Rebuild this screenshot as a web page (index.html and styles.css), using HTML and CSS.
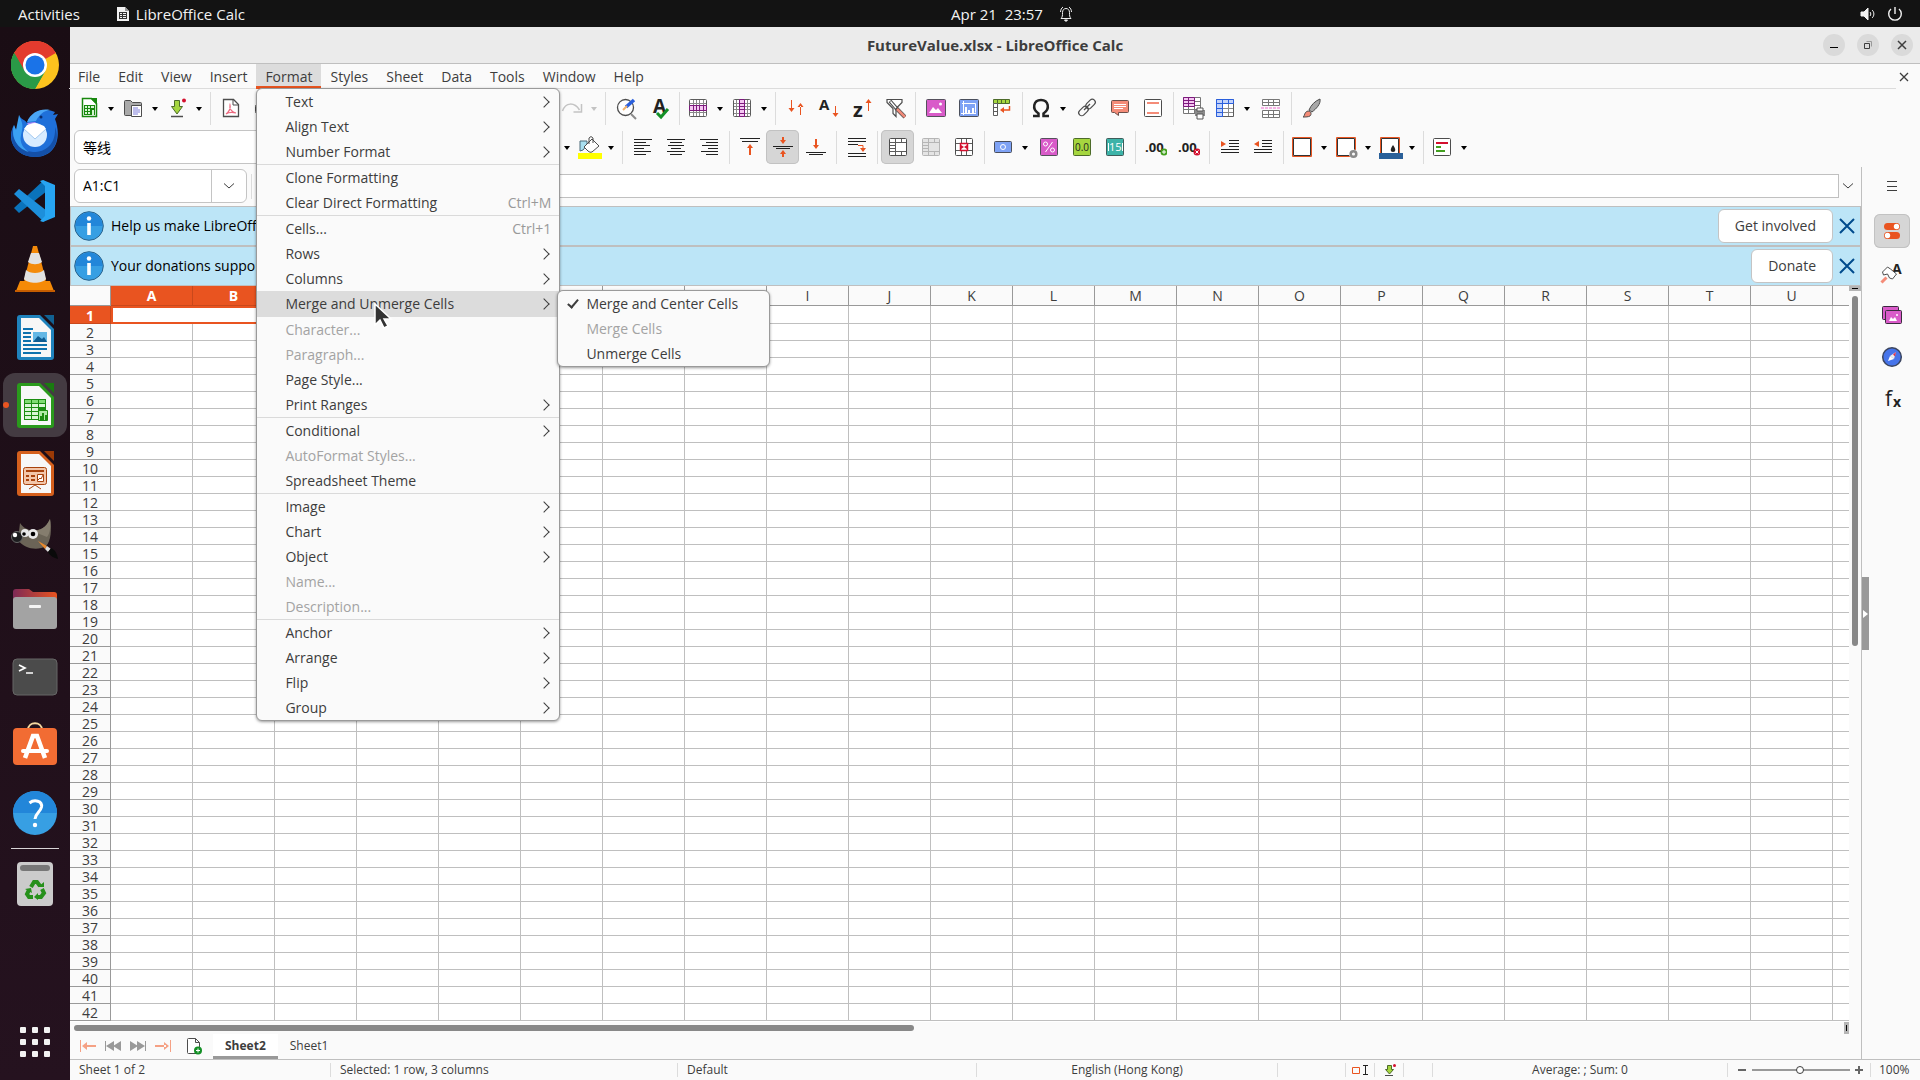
FILE: index.html
```html
<!DOCTYPE html>
<html lang="en">
<head>
    <meta charset="UTF-8">
    <meta name="viewport" content="width=device-width, initial-scale=1.0">
    <title>FutureValue.xlsx - LibreOffice Calc</title>
    <link rel="stylesheet" href="styles.css">
</head>
<body>
    <!-- Top panel -->
    <header class="panel">
        <div class="panel-left">
            <button class="panel-button">Activities</button>
            <button class="panel-button panel-app">
                <svg width="14" height="16" viewBox="0 0 14 16"><path d="M1 1h8l4 4v10H1z" fill="#f2f2f2"/><path d="M9 1l4 4H9z" fill="#999"/><path d="M3 6h8v7H3z" fill="#333"/><path d="M4 7h2v1H4zM7 7h3v1H7zM4 9h2v1H4zM7 9h3v1H7zM4 11h2v1H4zM7 11h3v1H7z" fill="#f2f2f2"/></svg>
                LibreOffice Calc
            </button>
        </div>
        <button class="panel-button panel-clock">
            <time>Apr 21&nbsp; 23:57</time>
            <svg width="14" height="16" viewBox="0 0 14 16" fill="none" stroke="#f2f2f2"><path d="M2 12.500c1.500-1.500 1.500-3 1.500-6C3.500 4 5 2.500 7 2.500S10.500 4 10.500 6.500c0 3 0 4.500 1.500 6zM1.500 6C1.500 4 2.500 2 4 1M12.500 6c0-2-1-4-2.500-5"/><path d="M5.500 14h3L7 15.500z" fill="#f2f2f2"/></svg>
        </button>
        <div class="panel-right">
            <svg width="16" height="16" viewBox="0 0 16 16" fill="none" stroke="#f2f2f2"><path d="M1 6h3l4-4v12l-4-4H1z" fill="#f2f2f2"/><path d="M10 6c1 1 1 3 0 4M12 4c2.500 2 2.500 6 0 8"/></svg>
            <svg width="16" height="16" viewBox="0 0 16 16" fill="none" stroke="#f2f2f2" stroke-width="1.400"><path d="M4 3a6.300 6.300 0 1 0 8 0M8 1v7"/></svg>
        </div>
    </header>

    <div class="desktop">
        <!-- Dock -->
        <nav class="dock">
            <button class="dock-item" aria-label="Chrome">
                <svg width="48" height="48" viewBox="0 0 48 48"><circle cx="24" cy="24" r="24" fill="#fcc31e"/><path d="M24 24L3.200 12A24 24 0 0 1 44.800 12z" fill="#e33b2e"/><path d="M24 24L3.200 12A24 24 0 0 0 24 48L34 30z" fill="#2a9a47"/><path d="M24 12h20.800a24 24 0 0 0-41.600 0L13.600 30z" fill="#e33b2e"/><path d="M3.200 12L13.600 30l10.400 6 10.400-6L24 48A24 24 0 0 1 3.200 12z" fill="#2a9a47"/><circle cx="24" cy="24" r="12" fill="#fff"/><circle cx="24" cy="24" r="9.500" fill="#1a73e8"/></svg>
            </button>
            <button class="dock-item" aria-label="Thunderbird">
                <svg width="48" height="48" viewBox="0 0 48 48"><path d="M8 6c3 6 6 4 8 8 4-12 18-16 28-11l-2 3 5-1-3 5c7 18 1 38-20 38C6 48-6 32 3 16c1 3 2 4 2 6 2-6 4-10 3-16z" fill="#1f70d9"/><path d="M16 13C20 3 30-1 39 1c-7 1-11 5-14 11z" fill="#4ba6f5"/><path d="M2 18c-2 13 7 24 20 25 14 0 23-9 22-25 6 15-3 30-20 30S-4 35 2 18z" fill="#1450a8"/><path d="M8 6c3 8 5 9 2 20-2 8 3 14 8 17C4 39 0 26 3 16l2 5z" fill="#3aa1f2"/><path d="M16 14l8-1 4 3-10 1z" fill="#b38bf5"/><circle cx="24" cy="26" r="12" fill="#d8ecff"/><path d="M13 20l11 10 11-10-2-3-9-3-8 2z" fill="#fff"/><path d="M13 20l11 10 11-10" fill="none" stroke="#a3c9ef"/><circle cx="30" cy="8" r="1.500" fill="#0b2d6b"/></svg>
            </button>
            <button class="dock-item" aria-label="Visual Studio Code">
                <svg width="48" height="48" viewBox="0 0 48 48"><path d="M33 3L3 31l5 5L36 14z" fill="#0a73bb"/><path d="M33 45L3 17l5-5 28 22z" fill="#1d8fdb"/><path d="M32 3l12 5v32l-12 5-3-1 5-5V9l-5-5z" fill="#27a5f2"/></svg>
            </button>
            <button class="dock-item" aria-label="VLC">
                <svg width="48" height="48" viewBox="0 0 48 48"><path d="M9 36h30l4 10H5z" fill="#f58a07"/><path d="M4 45h40v2H4z" fill="#c65d00"/><path d="M22 1h4l9 34c-4 5-18 5-22 0z" fill="#f48a0a"/><path d="M20 8h8l3 9c-4 3-10 3-14 0zM15 25c4 4 14 4 18 0l2 9c-4 5-18 5-22 0z" fill="#e2e2e2"/></svg>
            </button>
            <button class="dock-item" aria-label="Writer">
                <svg width="48" height="48" viewBox="0 0 48 48"><path d="M9 2h20l14 14v28a3 3 0 0 1-3 3H9a3 3 0 0 1-3-3V5a3 3 0 0 1 3-3z" fill="#1f83bd"/><path d="M10 5h18l12 12v27H10z" fill="#f7f7f7"/><path d="M33 2h10v10z" fill="#116192"/><path d="M12 15h10v2H12zM12 19h8v2h-8zM12 23h8v2h-8zM12 27h8v2h-8zM12 31h24v2H12zM12 35h24v2H12zM12 39h18v2H12z" fill="#0e72ae"/><path d="M22 19h14v10H22z" fill="#63b7e5"/><path d="M22 29l5-6 4 3 2-2 3 5z" fill="#0e5c92"/></svg>
            </button>
            <button class="dock-item active" aria-label="Calc">
                <svg width="48" height="48" viewBox="0 0 48 48"><path d="M9 2h20l14 14v28a3 3 0 0 1-3 3H9a3 3 0 0 1-3-3V5a3 3 0 0 1 3-3z" fill="#2a9a1c"/><path d="M10 5h18l12 12v27H10z" fill="#f7f7f7"/><path d="M33 2h10v10z" fill="#1a7a10"/><path d="M13 18h22v21H13z" fill="#1b8d10"/><path d="M14 19h6v3h-6zM21 19h6v3h-6zM28 19h6v3h-6z" fill="#7fdc72"/><path d="M14 23h6v3h-6zM21 23h6v3h-6zM28 23h6v3h-6zM14 27h6v3h-6zM21 27h6v3h-6zM14 31h6v3h-6zM21 31h6v3h-6zM14 35h6v3h-6zM21 35h6v3h-6z" fill="#d9f6d5"/><path d="M27.500 29.500h9v10h-9z" fill="#aeeaa5" stroke="#1b8d10"/><path d="M29 35h2v4h-2zM31 32h2v7h-2zM34 34h2v5h-2z" fill="#1b8d10"/></svg>
            </button>
            <button class="dock-item" aria-label="Impress">
                <svg width="48" height="48" viewBox="0 0 48 48"><path d="M9 2h20l14 14v28a3 3 0 0 1-3 3H9a3 3 0 0 1-3-3V5a3 3 0 0 1 3-3z" fill="#d5601d"/><path d="M10 5h18l12 12v27H10z" fill="#f7f7f7"/><path d="M33 2h10v10z" fill="#9c3a06"/><rect x="12.500" y="18.500" width="23" height="17" rx="2" fill="#f3c6a9" stroke="#a8420c"/><path d="M15 21h18v2H15zM15 26h3v2h-3zM15 30h3v2h-3zM20 26h4v2h-4zM20 30h4v2h-4z" fill="#a8420c"/><path d="M26.500 25.500h6v7h-6z" fill="#fff" stroke="#a8420c"/><path d="M27 31l2-2 1 1 2-4M24 36l-6 4M24 36l6 4" stroke="#a8420c" fill="none"/></svg>
            </button>
            <button class="dock-item" aria-label="GIMP">
                <svg width="48" height="48" viewBox="0 0 48 48"><path d="M9 6c4 6 8 6 12 8 9-1 14-3 18-12 2 9 1 23-4 27-8 5-22 3-28-6z" fill="#6b6457"/><path d="M21 14c9-1 14-3 18-12 1 8 0 14-3 18z" fill="#857d6e"/><circle cx="6" cy="20" r="5.500" fill="#1d1d1f" stroke="#666"/><circle cx="4" cy="18" r="2.200" fill="#fff"/><circle cx="14" cy="16" r="4" fill="#e8e8e8"/><circle cx="22" cy="17" r="5" fill="#e8e8e8"/><circle cx="13" cy="17" r="1.800"/><circle cx="22" cy="17" r="2.300"/><path d="M27 24l9 5-2 3z" fill="#e9892d"/><path d="M36 29l4 3-3 3-3-3z" fill="#ddd"/><path d="M40 31c4 2 6 5 7 11-4-1-8-3-10-7z" fill="#0a0a0a"/></svg>
            </button>
            <button class="dock-item" aria-label="Files">
                <svg width="48" height="48" viewBox="0 0 48 48"><defs><linearGradient id="folder"><stop offset="0" stop-color="#7d2a56"/><stop offset="1" stop-color="#e95420"/></linearGradient></defs><path d="M5 4h13l4 3h21a3 3 0 0 1 3 3v10H2V7a3 3 0 0 1 3-3z" fill="url(#folder)"/><rect x="2" y="12" width="44" height="32" rx="3" fill="#a3a3a3"/><rect x="18" y="20" width="12" height="3" rx="1" fill="#f4f4f4"/></svg>
            </button>
            <button class="dock-item" aria-label="Terminal">
                <svg width="48" height="48" viewBox="0 0 48 48"><rect x="2" y="6" width="44" height="36" rx="4" fill="#4b4b4b" stroke="#666"/><path d="M8 12l6 3-6 3M15 20h7" fill="none" stroke="#fff" stroke-width="1.700"/></svg>
            </button>
            <button class="dock-item" aria-label="Software">
                <svg width="48" height="48" viewBox="0 0 48 48"><path d="M17 9c0-9 14-9 14 0" fill="none" stroke="#f5d8a0" stroke-width="2"/><rect x="2" y="7" width="44" height="37" rx="4" fill="#f26c33"/><path d="M14 37l8-22h4l8 22" fill="none" stroke="#fff" stroke-width="4.500"/><path d="M12 30h24" stroke="#fff" stroke-width="4" stroke-linecap="round"/></svg>
            </button>
            <button class="dock-item" aria-label="Help">
                <svg width="48" height="48" viewBox="0 0 48 48"><circle cx="24" cy="24" r="22" fill="#379fe3"/><path d="M2 24a22 22 0 0 1 44 0z" fill="#2286d9"/><path d="M18.500 14c5-4 13-2 12 4-1 5-6 6-6.500 12" fill="none" stroke="#fff" stroke-width="3"/><circle cx="24" cy="36" r="2.200" fill="#fff"/></svg>
            </button>
            <hr class="dock-line">
            <button class="dock-item" aria-label="Trash">
                <svg width="48" height="48" viewBox="0 0 48 48"><rect x="6" y="2" width="36" height="44" rx="4" fill="#cbcbcb"/><rect x="9" y="5" width="30" height="6" rx="3" fill="#777"/><g fill="none" stroke="#26901b" stroke-width="4"><path d="M20 27l3-5h3l3 4M31 29l2 4-3 4h-4M22 37h-4l-2-3 2-4"/></g><path d="M27 27h6v-5zM27 33v7l-4-3zM14 29l6-1 1 5z" fill="#26901b"/></svg>
            </button>
            <button class="dock-item dock-apps" aria-label="Show Applications">
                <svg width="32" height="32" viewBox="0 0 32 32" fill="#f2f2f2"><rect x="1" y="1" width="6" height="6" rx="1"/><rect x="13" y="1" width="6" height="6" rx="1"/><rect x="25" y="1" width="6" height="6" rx="1"/><rect x="1" y="13" width="6" height="6" rx="1"/><rect x="13" y="13" width="6" height="6" rx="1"/><rect x="25" y="13" width="6" height="6" rx="1"/><rect x="1" y="25" width="6" height="6" rx="1"/><rect x="13" y="25" width="6" height="6" rx="1"/><rect x="25" y="25" width="6" height="6" rx="1"/></svg>
            </button>
        </nav>

        <main class="window">
            <div class="titlebar">
                <h1>FutureValue.xlsx - LibreOffice Calc</h1>
                <div class="window-buttons">
                    <button aria-label="Minimize"><svg width="10" height="10" viewBox="0 0 10 10"><path d="M1 7h8v1H1z"/></svg></button>
                    <button aria-label="Restore"><svg width="10" height="10" viewBox="0 0 10 10" fill="none" stroke="#3d3d3d"><path d="M1.500 3.500h5v5h-5z"/><path d="M3.500 1.500h5v5" stroke="#999"/></svg></button>
                    <button aria-label="Close"><svg width="10" height="10" viewBox="0 0 10 10" stroke="#3d3d3d" stroke-width="1.500"><path d="M1 1l8 8M9 1L1 9"/></svg></button>
                </div>
            </div>

            <div class="menubar">
                <ul class="menus">
                    <li><button>File</button></li>
                    <li><button>Edit</button></li>
                    <li><button>View</button></li>
                    <li><button>Insert</button></li>
                    <li class="open">
                        <button>Format</button>
                        <ul class="menu">
                            <li class="more"><button>Text</button></li>
                            <li class="more"><button>Align Text</button></li>
                            <li class="more"><button>Number Format</button></li>
                            <li class="line"><button>Clone Formatting</button></li>
                            <li><button>Clear Direct Formatting<kbd>Ctrl+M</kbd></button></li>
                            <li class="line"><button>Cells...<kbd>Ctrl+1</kbd></button></li>
                            <li class="more"><button>Rows</button></li>
                            <li class="more"><button>Columns</button></li>
                            <li class="more hover">
                                <button>Merge and Unmerge Cells</button>
                                <ul class="menu submenu">
                                    <li class="checked"><button>Merge and Center Cells</button></li>
                                    <li><button disabled>Merge Cells</button></li>
                                    <li><button>Unmerge Cells</button></li>
                                </ul>
                            </li>
                            <li><button disabled>Character...</button></li>
                            <li><button disabled>Paragraph...</button></li>
                            <li><button>Page Style...</button></li>
                            <li class="more"><button>Print Ranges</button></li>
                            <li class="more line"><button>Conditional</button></li>
                            <li><button disabled>AutoFormat Styles...</button></li>
                            <li><button>Spreadsheet Theme</button></li>
                            <li class="more line"><button>Image</button></li>
                            <li class="more"><button>Chart</button></li>
                            <li class="more"><button>Object</button></li>
                            <li><button disabled>Name...</button></li>
                            <li><button disabled>Description...</button></li>
                            <li class="more line"><button>Anchor</button></li>
                            <li class="more"><button>Arrange</button></li>
                            <li class="more"><button>Flip</button></li>
                            <li class="more"><button>Group</button></li>
                        </ul>
                    </li>
                    <li><button>Styles</button></li>
                    <li><button>Sheet</button></li>
                    <li><button>Data</button></li>
                    <li><button>Tools</button></li>
                    <li><button>Window</button></li>
                    <li><button>Help</button></li>
                </ul>
                <button class="close-doc" aria-label="Close document"><svg width="10" height="10" viewBox="0 0 10 10" stroke="#3d3d3d" stroke-width="1.300"><path d="M1 1l8 8M9 1L1 9"/></svg></button>
            </div>

            <!-- Standard toolbar -->
            <div class="toolbar">
                <button class="tool" aria-label="New"><svg viewBox="0 0 24 24"><path d="M4.500 2.500h9l5 5v13h-14z" fill="#fff" stroke="#18880e" stroke-width="1.500"/><path d="M12 2h7v7z" fill="#18880e"/><path d="M6 9h11v10H6z" fill="#18880e"/><path d="M7 10h2v2H7zM10 10h2v2h-2zM13 10h3v2h-3zM7 13h2v2H7zM10 13h2v2h-2zM7 16h2v2H7zM10 16h2v2h-2zM14 14h2v5h-2z" fill="#d4f5d0"/></svg></button>
                <button class="drop" aria-label="New options"></button>
                <button class="tool" aria-label="Open"><svg viewBox="0 0 24 24"><path d="M2.500 5.500q0-1 1-1h5l2 2h8q1 0 1 1v12h-16q-1 0-1-1z" fill="#a9a9a9" stroke="#4d4d4d"/><path d="M9.500 9.500h10v11h-10z" fill="#fff" stroke="#4d4d4d"/><path d="M11 12h5M11 14h7M11 16h7M11 18h5" stroke="#7c7cd8"/></svg></button>
                <button class="drop" aria-label="Open options"></button>
                <button class="tool" aria-label="Save"><svg viewBox="0 0 24 24"><path d="M8.500 4.500h5v6h3L11 18l-5.500-7.500h3z" fill="#a5d63f" stroke="#4d6b2a"/><path d="M5 20.500h12" stroke="#4d4d4d" stroke-width="1.500"/><circle cx="18" cy="4.500" r="2" fill="#d3102e"/></svg></button>
                <button class="drop" aria-label="Save options"></button>
                <hr>
                <button class="tool" aria-label="Export as PDF"><svg viewBox="0 0 24 24"><path d="M5.500 3.500h10l5 5v12h-15z" fill="#fff" stroke="#4d4d4d" stroke-width="1.300"/><path d="M15 3v6h6" fill="none" stroke="#4d4d4d"/><path d="M8 18c3-2 5-6 4-9-1 4 2 7 6 8-4-1-7-1-10 1z" fill="none" stroke="#ec6a80" stroke-width="1.200"/></svg></button>
                <button class="tool" aria-label="Print"><svg viewBox="0 0 24 24"><rect x="4.500" y="8.500" width="17" height="9" rx="2" fill="#a9a9a9" stroke="#4d4d4d"/></svg></button>
                <span class="toolbar-rest"></span>
                <button class="tool" aria-label="Redo"><svg viewBox="0 0 24 24"><path d="M1.500 15c3-9 12-9 17-1" fill="none" stroke="#c3c3c3" stroke-width="1.500"/><path d="M20.500 8v8h-8" fill="none" stroke="#c3c3c3" stroke-width="1.500"/></svg></button>
                <button class="drop off" aria-label="Redo options"></button>
                <hr>
                <button class="tool" aria-label="Find and Replace"><svg viewBox="0 0 24 24"><circle cx="12.500" cy="11.500" r="8" fill="#fff" stroke="#4d4d4d" stroke-width="1.300"/><path d="M18 18l5 5" stroke="#8a8a8a" stroke-width="2"/><path d="M13 11l8-7" stroke="#2a5fdd" stroke-width="3.500"/><path d="M10 14l4-4" stroke="#f2b26b" stroke-width="2"/></svg></button>
                <button class="tool" aria-label="Spelling"><svg viewBox="0 0 24 24"><text x="7" y="17" class="glyph-bold" font-size="19">A</text><path d="M11 17l4 4 7-8" fill="none" stroke="#149026" stroke-width="3"/></svg></button>
                <hr>
                <button class="tool" aria-label="Row"><svg viewBox="0 0 24 24"><rect x="2.500" y="3.500" width="17" height="17" rx="1" fill="#fff" stroke="#5c5c5c"/><path d="M6.500 4v16M9.500 4v16M12.500 4v16M16.500 4v16M3 7.500h16M3 16.500h16" stroke="#8a8a8a"/><path d="M2.500 9.500h17v5h-17z" fill="#f4c6f2" stroke="#7d1a7d"/><path d="M6.500 10v4M9.500 10v4M12.500 10v4M16.500 10v4" stroke="#7d1a7d"/></svg></button>
                <button class="drop" aria-label="Row options"></button>
                <button class="tool" aria-label="Column"><svg viewBox="0 0 24 24"><rect x="2.500" y="3.500" width="17" height="17" rx="1" fill="#fff" stroke="#5c5c5c"/><path d="M3 7.500h16M3 10.500h16M3 13.500h16M3 17.500h16M5.500 4v16M16.500 4v16" stroke="#8a8a8a"/><path d="M8.500 3.500h5v17h-5z" fill="#f4c6f2" stroke="#7d1a7d"/><path d="M9 7.500h4M9 10.500h4M9 13.500h4M9 17.500h4" stroke="#7d1a7d"/></svg></button>
                <button class="drop" aria-label="Column options"></button>
                <hr>
                <button class="tool" aria-label="Sort"><svg viewBox="0 0 24 24" class="orange"><path d="M8 4h1v9H8zM5.500 12h6l-3 4zM17 10h1v9h-1zM14.500 11h6l-3-4z"/></svg></button>
                <button class="tool" aria-label="Sort Ascending"><svg viewBox="0 0 24 24"><text x="3" y="14" class="glyph-bold" font-size="15">A</text><path d="M19 10h1v8h-1zM16.500 17h6l-3 4z" fill="#e95420"/></svg></button>
                <button class="tool" aria-label="Sort Descending"><svg viewBox="0 0 24 24"><text x="4" y="21" class="glyph-bold" font-size="20">z</text><path d="M19 7h1v8h-1zM16.500 7h6l-3-4z" fill="#e95420"/></svg></button>
                <button class="tool" aria-label="AutoFilter"><svg viewBox="0 0 24 24"><path d="M5 3.500h15v3l-6 6v8l-3-3v-5l-6-6z" fill="#fff" stroke="#4d4d4d" stroke-width="1.200"/><path d="M8 5l7 8" stroke="#4d4d4d" stroke-width="3.500"/><path d="M8.500 5.500l6 7" stroke="#fff" stroke-width="1.500"/><path d="M14 12l9 9" stroke="#4d4d4d" stroke-width="4"/><path d="M15 13l8 8" stroke="#f08a78" stroke-width="2.500"/></svg></button>
                <hr>
                <button class="tool" aria-label="Insert Image"><svg viewBox="0 0 24 24"><rect x="3.500" y="3.500" width="19" height="17" rx="1" fill="#d95bc9" stroke="#55505c"/><path d="M6 17l4-6 3 3 2-2 4 5z" fill="#fff"/><circle cx="17.500" cy="8" r="1.500" fill="#fff"/></svg></button>
                <button class="tool" aria-label="Insert Chart"><svg viewBox="0 0 24 24"><rect x="3.500" y="3.500" width="19" height="17" rx="1" fill="#7ea2f5" stroke="#4a4f5c"/><path d="M7.500 5v14M5 17.500h15M6 7.500h13.500v9" stroke="#fff" fill="none"/><path d="M9 11h2v6H9zM12 14h2v3h-2zM16 12h2v5h-2z" fill="#fff"/></svg></button>
                <button class="tool" aria-label="Pivot Table"><svg viewBox="0 0 24 24"><path d="M4.500 3.500h16v4h-16z" fill="#a5d63f" stroke="#4d6b2a"/><path d="M8.500 4v3M12.500 4v3M16.500 4v3" stroke="#4d6b2a"/><path d="M4.500 7.500h4v12h-4zM5 11.500h3M5 15.500h3" fill="#fff" stroke="#5c5c5c"/><path d="M20.500 10v4h-6" fill="none" stroke="#e95420" stroke-width="1.500"/><path d="M15 11v6l-4-3z" fill="#e95420"/></svg></button>
                <hr>
                <button class="tool" aria-label="Special Character"><svg viewBox="0 0 24 24"><path d="M3 20h5.500v-2.500C1.500 13 3.500 4 11 4s9.500 9 2.500 13.500V20H19" fill="none" stroke="#222" stroke-width="2.500"/></svg></button>
                <button class="drop" aria-label="Special Character options"></button>
                <button class="tool" aria-label="Hyperlink"><svg viewBox="0 0 24 24" fill="none" stroke="#4d4d4d" stroke-width="1.200"><rect x="4" y="12" width="11" height="6" rx="3" transform="rotate(-45 9.500 15)"/><rect x="11" y="5" width="11" height="6" rx="3" transform="rotate(-45 16.500 8)"/><path d="M10 14l6-6"/></svg></button>
                <button class="tool" aria-label="Comment"><svg viewBox="0 0 24 24"><path d="M4.500 5.500q0-1 1-1h15q1 0 1 1v10q0 1-1 1h-9v3l-4-3h-2q-1 0-1-1z" fill="#f48c78" stroke="#6b4f4a"/><path d="M7 8.500h12M7 10.500h12M7 12.500h9" stroke="#fff"/></svg></button>
                <button class="tool" aria-label="Headers and Footers"><svg viewBox="0 0 24 24"><rect x="4.500" y="3.500" width="17" height="17" rx="1" fill="#fff" stroke="#4d4d4d"/><path d="M7 7h12M7 17h12" stroke="#f48c78" stroke-width="2"/></svg></button>
                <hr>
                <button class="tool" aria-label="Define Print Area"><svg viewBox="0 0 24 24"><path d="M2.500 1.500h17v16h-17zM3 5.500h16M3 9.500h16M3 13.500h16M7.500 2v15M13.500 2v15" fill="#fff" stroke="#777"/><path d="M2.500 1.500h11v9h-11z" fill="#f4c6f2" stroke="#7d1a7d"/><path d="M3 4.500h10M3 7.500h10M7.500 2v8" stroke="#7d1a7d"/><path d="M14 14h10v6H14z" fill="#8a8a8a"/><path d="M16 12h6v3h-6zM16 18h6v5h-6z" fill="#fff" stroke="#555"/></svg></button>
                <button class="tool" aria-label="Freeze Rows and Columns"><svg viewBox="0 0 24 24"><path d="M2.500 3.500h17v17h-17z" fill="#fff" stroke="#5c5c5c"/><path d="M2.500 3.500h17v4h-11v13h-6z" fill="#c3d3fa"/><path d="M8.500 8v12M14.500 8v12M9 12.500h10M9 16.500h10" stroke="#8a8a8a"/><path d="M2.500 3.500h17v4h-11v13h-6zM8.500 4v4M14.500 4v4M3 7.500h5M3 12.500h5M3 16.500h5" stroke="#2a5fdd" fill="none"/></svg></button>
                <button class="drop" aria-label="Freeze options"></button>
                <button class="tool" aria-label="Split Window"><svg viewBox="0 0 24 24" fill="#fff" stroke="#777"><path d="M4.500 3.500h17v6h-17zM10.500 4v5M15.500 4v5M5 6.500h16M4.500 14.500h17v7h-17zM10.500 15v6M15.500 15v6M5 18.500h16"/><path d="M3 12h20" stroke="#f06bd0" stroke-dasharray="3 1"/></svg></button>
                <hr>
                <button class="tool" aria-label="Show Draw Functions"><svg viewBox="0 0 24 24"><path d="M10 14c2-5 6-9 11-11 1 5-4 10-8 13z" fill="#a9a9a9" stroke="#4d4d4d"/><path d="M4 21c2-1 1-5 5-6 3 0 4 3 2 5-2 1-4 1-7 1z" fill="#f48c78" stroke="#4d4d4d"/></svg></button>
            </div>

            <!-- Formatting toolbar -->
            <div class="toolbar">
                <input class="font-name" type="text" value="等线" aria-label="Font name">
                <span class="toolbar-fill"></span>
                <button class="drop" aria-label="Font color options"></button>
                <button class="tool" aria-label="Background Color"><svg viewBox="0 0 24 24"><path d="M2 16V6h7v4l-4 5z" fill="#a9dff0" stroke="#4d6b78"/><path d="M6 12l8-8 7 7-7 6q-2 1-4-1z" fill="#fff" stroke="#4d4d4d"/><path d="M11 9V3q2-3 4 0v5" fill="none" stroke="#4d4d4d"/><path d="M0 18h24v6H0z" fill="#ff0"/></svg></button>
                <button class="drop" aria-label="Background Color options"></button>
                <hr>
                <button class="tool" aria-label="Align Left"><svg viewBox="0 0 24 24" class="lines"><path d="M4 4.500h18M4 7.500h12M4 10.500h16M4 13.500h10M4 16.500h17M4 19.500h12"/></svg></button>
                <button class="tool" aria-label="Center Horizontally"><svg viewBox="0 0 24 24" class="lines"><path d="M4 4.500h18M7 7.500h12M5 10.500h16M8 13.500h10M4 16.500h18M7 19.500h12"/></svg></button>
                <button class="tool" aria-label="Align Right"><svg viewBox="0 0 24 24" class="lines"><path d="M4 4.500h18M10 7.500h12M6 10.500h16M12 13.500h10M5 16.500h17M10 19.500h12"/></svg></button>
                <hr>
                <button class="tool" aria-label="Align Top"><svg viewBox="0 0 24 24" class="lines"><path d="M3 3.500h20M5 6.500h16"/><path d="M12 13h2v7h-2zM10 13h6l-3-4z" class="orange"/></svg></button>
                <button class="tool pressed" aria-label="Center Vertically"><svg viewBox="0 0 24 24" class="lines"><path d="M3 11.500h20M6 13.500h14"/><path d="M12 2h2v3h-2zM10 5h6l-3 4zM12 19h2v3h-2zM10 19h6l-3-4z" class="orange"/></svg></button>
                <button class="tool" aria-label="Align Bottom"><svg viewBox="0 0 24 24" class="lines"><path d="M3 17.500h20M6 19.500h14"/><path d="M12 4h2v7h-2zM10 10h6l-3 4z" class="orange"/></svg></button>
                <hr>
                <button class="tool" aria-label="Wrap Text"><svg viewBox="0 0 24 24" class="lines"><path d="M4 3.500h18M4 6.500h18M4 9.500h10M4 18.500h18M4 21.500h18"/><path d="M14 10.500h5v3" stroke="#e95420"/><path d="M16 13h6l-3 4z" class="orange"/></svg></button>
                <hr>
                <button class="tool pressed" aria-label="Merge and Center Cells"><svg viewBox="0 0 24 24"><rect x="4.500" y="3.500" width="17" height="17" rx="1" fill="#fff" stroke="#4d4d4d"/><path d="M10.500 4v16M5 7.500h16M5 16.500h16M5 10.500h5M5 13.500h5M16.500 4v3M16.500 17v3" stroke="#5c5c5c"/></svg></button>
                <button class="tool" aria-label="Merge Cells"><svg viewBox="0 0 24 24"><rect x="4.500" y="3.500" width="17" height="17" rx="1" fill="#e4e4e4" stroke="#b5b5b5"/><path d="M10.500 4v16M5 7.500h16M5 16.500h16M5 10.500h5M5 13.500h5M16.500 4v3M16.500 17v3" stroke="#b5b5b5"/></svg></button>
                <button class="tool" aria-label="Unmerge Cells"><svg viewBox="0 0 24 24"><rect x="4.500" y="3.500" width="17" height="17" rx="1" fill="#fff" stroke="#4d4d4d"/><path d="M10.500 4v16M15.500 4v16M5 8.500h16M5 15.500h16" stroke="#5c5c5c"/><path d="M9.500 8.500h7v7h-7z" fill="#fff" stroke="#d3102e" stroke-width="1.500"/><path d="M10 10l3 2-3 2zM16 10l-3 2 3 2z" fill="#d3102e"/></svg></button>
                <hr>
                <button class="tool" aria-label="Format as Currency"><svg viewBox="0 0 24 24"><rect x="2.500" y="6.500" width="17" height="11" rx="1" fill="#7ea2f5" stroke="#4a4f5c"/><circle cx="11" cy="12" r="2.500" fill="none" stroke="#fff"/></svg></button>
                <button class="drop" aria-label="Currency options"></button>
                <button class="tool" aria-label="Format as Percent"><svg viewBox="0 0 24 24"><rect x="4.500" y="3.500" width="17" height="17" rx="1" fill="#d95bc9" stroke="#55505c"/><circle cx="9.500" cy="9" r="2" fill="none" stroke="#fff"/><circle cx="16.500" cy="15" r="2" fill="none" stroke="#fff"/><path d="M16.500 7l-7 10" stroke="#fff"/></svg></button>
                <button class="tool" aria-label="Format as Number"><svg viewBox="0 0 24 24"><rect x="4.500" y="3.500" width="17" height="17" rx="1" fill="#a5d63f" stroke="#4d6b2a"/><text x="6" y="16" class="glyph" font-size="10">0.0</text></svg></button>
                <button class="tool" aria-label="Format as Date"><svg viewBox="0 0 24 24"><rect x="4.500" y="3.500" width="17" height="17" rx="1" fill="#3db3a8" stroke="#3f5c5a"/><text x="7" y="16" font-size="11" fill="#fff">15</text><path d="M6.500 8v8M20.500 8v8" stroke="#fff"/></svg></button>
                <hr>
                <button class="tool" aria-label="Add Decimal Place"><svg viewBox="0 0 24 24"><text x="2" y="17" class="glyph-bold" font-size="13">.00</text><circle cx="21" cy="17" r="3.500" fill="#43a01f"/><path d="M21 15v4M19 17h4" stroke="#fff"/></svg></button>
                <button class="tool" aria-label="Delete Decimal Place"><svg viewBox="0 0 24 24"><text x="2" y="17" class="glyph-bold" font-size="13">.00</text><circle cx="21" cy="17" r="3.500" fill="#d3102e"/><path d="M19.500 15.500l3 3M22.500 15.500l-3 3" stroke="#fff"/></svg></button>
                <hr>
                <button class="tool" aria-label="Increase Indent"><svg viewBox="0 0 24 24" class="lines"><path d="M12 5.500h10M12 8.500h10M12 11.500h10M4 14.500h18M4 17.500h18"/><path d="M4 6l5 3-5 3z" class="orange"/></svg></button>
                <button class="tool" aria-label="Decrease Indent"><svg viewBox="0 0 24 24" class="lines"><path d="M12 5.500h10M12 8.500h10M12 11.500h10M4 14.500h18M4 17.500h18"/><path d="M9 6L4 9l5 3z" class="orange"/></svg></button>
                <hr>
                <button class="tool" aria-label="Borders"><svg viewBox="0 0 24 24"><path d="M1.500 2.500h19v19h-19z" fill="#fff" stroke="#e95420"/><path d="M2.500 3.500h17v17h-17z" fill="none" stroke="#333"/></svg></button>
                <button class="drop" aria-label="Borders options"></button>
                <button class="tool" aria-label="Border Style"><svg viewBox="0 0 24 24"><path d="M1.500 2.500h19v19h-19z" fill="#fff" stroke="#e95420"/><path d="M2.500 3.500h17v17h-17z" fill="none" stroke="#333"/><circle cx="18.500" cy="19" r="4.500" fill="#fafafa"/><circle cx="18.500" cy="19" r="2.800" fill="none" stroke="#8a8a8a" stroke-width="2.500"/></svg></button>
                <button class="drop" aria-label="Border Style options"></button>
                <button class="tool" aria-label="Border Color"><svg viewBox="0 0 24 24"><path d="M1.500 18V2.500h19V18" fill="#fff" stroke="#e95420"/><path d="M2.500 18V3.500h17V18" fill="none" stroke="#333"/><path d="M14 10c3 4 3 7 0 7s-3-3 0-7z" fill="#222"/><path d="M0 18h24v6H0z" fill="#2a6099"/></svg></button>
                <button class="drop" aria-label="Border Color options"></button>
                <hr>
                <button class="tool" aria-label="Conditional Formatting"><svg viewBox="0 0 24 24"><rect x="2.500" y="3.500" width="17" height="17" rx="1" fill="#fff" stroke="#4d4d4d"/><path d="M5 8h12" stroke="#d3102e" stroke-width="2"/><path d="M5 12h5M5 16h9" stroke="#43a01f" stroke-width="2"/></svg></button>
                <button class="drop" aria-label="Conditional options"></button>
            </div>

            <div class="work">
                <section class="document">
                    <div class="formula-bar">
                        <div class="name-box">
                            <input type="text" value="A1:C1" aria-label="Name Box">
                            <button aria-label="Show names"><svg width="12" height="8" viewBox="0 0 12 8" fill="none" stroke="#3d3d3d"><path d="M1 1.500l5 4.500 5-4.500"/></svg></button>
                        </div>
                        <hr>
                        <input class="formula" type="text" aria-label="Input line">
                        <button class="expand" aria-label="Expand formula bar"><svg width="12" height="8" viewBox="0 0 12 8" fill="none" stroke="#3d3d3d"><path d="M1 1.500l5 4.500 5-4.500"/></svg></button>
                    </div>

                    <div class="infobar">
                        <svg width="30" height="30" viewBox="0 0 30 30"><circle cx="15" cy="15" r="14.300" fill="#379fe3" stroke="#2b628c"/><path d="M1.500 15a13.500 13.500 0 0 1 27 0z" fill="#2286d9"/><path d="M13.200 12h3.600v12h-3.600z" fill="#fff"/><circle cx="15" cy="7.500" r="2.200" fill="#fff"/></svg>
                        <p>Help us make LibreOffice even better!</p>
                        <button class="action">Get involved</button>
                        <button class="dismiss" aria-label="Close"><svg width="16" height="16" viewBox="0 0 16 16" stroke="#004b8d" stroke-width="2"><path d="M1 1l14 14M15 1L1 15"/></svg></button>
                    </div>
                    <div class="infobar">
                        <svg width="30" height="30" viewBox="0 0 30 30"><circle cx="15" cy="15" r="14.300" fill="#379fe3" stroke="#2b628c"/><path d="M1.500 15a13.500 13.500 0 0 1 27 0z" fill="#2286d9"/><path d="M13.200 12h3.600v12h-3.600z" fill="#fff"/><circle cx="15" cy="7.500" r="2.200" fill="#fff"/></svg>
                        <p>Your donations support our worldwide community.</p>
                        <button class="action">Donate</button>
                        <button class="dismiss" aria-label="Close"><svg width="16" height="16" viewBox="0 0 16 16" stroke="#004b8d" stroke-width="2"><path d="M1 1l14 14M15 1L1 15"/></svg></button>
                    </div>

                    <div class="sheet-area">
                        <div class="sheet">
                            <table id="grid">
                                <thead></thead>
                                <tbody></tbody>
                            </table>
                        </div>
                        <div class="vscroll">
                            <span class="split-v"></span>
                            <span class="thumb-v"></span>
                        </div>
                    </div>

                    <div class="hscroll">
                        <span class="thumb-h"></span>
                        <span class="split-h"></span>
                    </div>

                    <div class="tabs">
                        <button class="tab-nav" aria-label="First sheet"><svg width="18" height="14" viewBox="0 0 18 14" fill="#f5a184"><path d="M1 1h1v12H1zM6 6h11v2H6zM3 7l5-4v8z"/></svg></button>
                        <button class="tab-nav" aria-label="Previous sheet"><svg width="18" height="14" viewBox="0 0 18 14" fill="#999"><path d="M1 2h1v10H1zM10 2v10L2 7zM17 2v10L9 7z"/></svg></button>
                        <button class="tab-nav" aria-label="Next sheet"><svg width="18" height="14" viewBox="0 0 18 14" fill="#999"><path d="M16 2h1v10h-1zM8 2v10l8-5zM1 2v10l8-5z"/></svg></button>
                        <button class="tab-nav" aria-label="Last sheet"><svg width="18" height="14" viewBox="0 0 18 14" fill="#f5a184"><path d="M16 1h1v12h-1zM1 6h11v2H1zM15 7l-5-4v8z"/></svg></button>
                        <button class="tab-add" aria-label="Add sheet"><svg width="16" height="18" viewBox="0 0 16 18"><path d="M1.500 2.500q0-1 1-1h7l4 4v10q0 1-1 1h-10q-1 0-1-1zM9.500 1.500v4h4" fill="#fff" stroke="#4d4d4d"/><circle cx="12" cy="13.500" r="4" fill="#149026"/><path d="M12 11.500v4M10 13.500h4" stroke="#fff"/></svg></button>
                        <button class="tab current">Sheet2</button>
                        <button class="tab">Sheet1</button>
                    </div>
                </section>

                <aside class="sidebar">
                    <button class="deck-menu" aria-label="Sidebar settings"><svg width="12" height="10" viewBox="0 0 12 10" stroke="#3d3d3d"><path d="M1 .500h10M1 5.500h10M1 9.500h10"/></svg></button>
                    <button class="deck pressed" aria-label="Properties"><svg viewBox="0 0 24 24"><rect x="4" y="4" width="16" height="7" rx="3.500" fill="#e95420"/><rect x="4" y="13" width="16" height="7" rx="3.500" fill="#e95420"/><circle cx="16.500" cy="7.500" r="2.700" fill="#fff"/><circle cx="7.500" cy="16.500" r="2.700" fill="#fff"/></svg></button>
                    <button class="deck" aria-label="Styles"><svg viewBox="0 0 24 24"><text x="12" y="13" class="glyph-bold" font-size="14">A</text><path d="M1.500 21.500l5-5" stroke="#f48c78" stroke-width="3"/><path d="M2.500 11l5-5 3 2 6 5-4 5-3-1-2-4-4 1z" fill="#fff" stroke="#4d4d4d"/></svg></button>
                    <button class="deck" aria-label="Gallery"><svg viewBox="0 0 24 24" stroke="#3a2c3e"><rect x="2.500" y="3.500" width="16" height="13" rx="1" fill="#d95bc9"/><rect x="5.500" y="7.500" width="16" height="13" rx="1" fill="#d95bc9"/><path d="M9 18l2-4 2 2 2-2 2 4z" fill="#fff" stroke="none"/><circle cx="17" cy="12" r="1" fill="#fff" stroke="none"/></svg></button>
                    <button class="deck" aria-label="Navigator"><svg viewBox="0 0 24 24"><circle cx="12" cy="12" r="9.300" fill="#4674ea" stroke="#3c4660" stroke-width="1.500"/><path d="M8 16l2-5 4 3z" fill="#fff"/><path d="M10 11l6-4-2 7z" fill="#eee"/><path d="M16 7l-3 2.500 2 2z" fill="#e0304a"/></svg></button>
                    <button class="deck" aria-label="Functions"><svg viewBox="0 0 24 24"><text x="5" y="19" class="glyph" font-size="21">f</text><text x="13" y="20" class="glyph-bold" font-size="14">x</text></svg></button>
                    <button class="deck-handle" aria-label="Hide sidebar"></button>
                </aside>
            </div>

            <footer class="statusbar">
                <span>Sheet 1 of 2</span>
                <span>Selected: 1 row, 3 columns</span>
                <span>Default</span>
                <span class="center">English (Hong Kong)</span>
                <span></span>
                <span class="center icon"><svg width="18" height="12" viewBox="0 0 18 12" fill="none"><path d="M1.500 3.500h7v6h-7z" stroke="#e95420"/><path d="M12 1.500h5M12 10.500h5M14.500 2v8" stroke="#222"/></svg></span>
                <span class="center icon"><svg width="14" height="14" viewBox="0 0 14 14"><path d="M5.500 2.500h4v4h2L7.500 11l-4-4.500h2z" fill="#a5d63f" stroke="#4d6b2a"/><path d="M3 12.500h8" stroke="#4d4d4d"/><circle cx="12.500" cy="2.500" r="1.500" fill="#d3102e"/></svg></span>
                <span></span>
                <span class="center">Average: ; Sum: 0</span>
                <span class="zoom">
                    <button aria-label="Zoom out"><svg width="10" height="10" viewBox="0 0 10 10"><path d="M1 4h8v2H1z" fill="#666"/></svg></button>
                    <input type="range" min="20" max="180" value="99" aria-label="Zoom">
                    <button aria-label="Zoom in"><svg width="10" height="10" viewBox="0 0 10 10"><path d="M1 4h8v2H1zM4 1h2v8H4z" fill="#666"/></svg></button>
                </span>
                <span>100%</span>
            </footer>
        </main>
    </div>

    <svg class="pointer" width="20" height="28" viewBox="0 0 20 28"><path d="M2 1v21l5-5 4 8 4-2-4-7h7z" fill="#333" stroke="#fff" stroke-width="1.500"/></svg>

    <script>
        const columns = 'ABCDEFGHIJKLMNOPQRSTU'.split('');
        const rowCount = 42;
        const mergedColumns = 3;

        // Column headers, with an empty cell at the end for the part of V that fits
        let head = '<tr><th class="corner"></th>';
        columns.forEach((name, i) => {
            head += `<th class="${i < mergedColumns ? 'selected' : ''}">${name}</th>`;
        });
        head += '<th class="last"></th></tr>';
        document.querySelector('#grid thead').innerHTML = head;

        // A1:C1 is one merged cell
        let body = '';
        for (let row = 1; row <= rowCount; row++) {
            const first = row === 1;
            body += `<tr><th class="${first ? 'selected' : ''}">${row}</th>`;
            body += first ? `<td class="cursor" colspan="${mergedColumns}"></td>` : '';
            body += '<td></td>'.repeat(columns.length - (first ? mergedColumns : 0));
            body += '<td class="last"></td></tr>';
        }
        document.querySelector('#grid tbody').innerHTML = body;
    </script>
</body>
</html>
```

FILE: styles.css
```css
* {
    box-sizing: border-box;
}
body {
    margin: 0;
    height: 100vh;
    display: flex;
    flex-direction: column;
    overflow: hidden;
    background: #1d0f18;
    color: #3d3d3d;
    font-family: "Open Sans", "Noto Sans", "Noto Sans CJK SC", sans-serif;
    font-size: 14px;
    line-height: 20px;
}
button, input {
    margin: 0;
    padding: 0;
    border: none;
    background: none;
    color: inherit;
    font: inherit;
}
button {
    display: flex;
    align-items: center;
    justify-content: center;
}
svg {
    display: block;
    flex: none;
}
ul {
    margin: 0;
    padding: 0;
    list-style: none;
}

/* Top panel */
.panel {
    display: grid;
    grid-template-columns: 1fr auto 1fr;
    align-items: center;
    height: 27px;
    flex: none;
    background: #131313;
    color: #f2f2f2;
    font-size: 15px;
}
.panel-left {
    display: flex;
    gap: 36px;
    padding-left: 18px;
}
.panel-app {
    gap: 6px;
}
.panel-clock {
    gap: 16px;
    margin-left: 104px;
}
.panel-right {
    display: flex;
    justify-content: flex-end;
    gap: 11px;
    padding-right: 17px;
}

.desktop {
    flex: 1;
    display: flex;
    min-height: 0;
}

/* Dock */
.dock {
    width: 70px;
    flex: none;
    display: flex;
    flex-direction: column;
    align-items: center;
    gap: 4px;
    padding: 6px 0;
    background: linear-gradient(#1a0d14, #25121f);
}
.dock-item {
    width: 64px;
    height: 64px;
    flex: none;
    border-radius: 12px;
}
.dock-item.active {
    position: relative;
    background: #443b42;
}
.dock-item.active::before {
    content: "";
    position: absolute;
    left: 0;
    width: 6px;
    height: 6px;
    border-radius: 50%;
    background: #e95420;
}
.dock-line {
    width: 48px;
    height: 1px;
    margin: -1px 0;
    border: none;
    background: #d8d4d6;
}
.dock-apps {
    margin-top: auto;
}

/* Window */
.window {
    flex: 1;
    display: flex;
    flex-direction: column;
    min-width: 0;
    background: #fafafa;
}
.titlebar {
    display: grid;
    grid-template-columns: 1fr auto 1fr;
    align-items: center;
    height: 37px;
    flex: none;
    border-bottom: 1px solid #bfbfbf;
    background: #ebebeb;
}
.titlebar h1 {
    grid-column: 2;
    margin: 0;
    font-size: 15px;
    font-weight: bold;
}
.window-buttons {
    display: flex;
    justify-content: flex-end;
    gap: 12px;
    padding-right: 7px;
}
.window-buttons button {
    width: 22px;
    height: 22px;
    border-radius: 50%;
    background: #dadada;
}

/* Menus */
.menubar {
    display: flex;
    height: 25px;
    flex: none;
}
.menus {
    flex: 1;
    display: flex;
    margin-left: -1px;
    border-bottom: 1px solid #dcdcdc;
}
.menus > li {
    position: relative;
}
.menus > li > button {
    height: 25px;
    padding: 0 9px;
}
.menus > .open > button {
    background: #dcdcdc;
    box-shadow: inset 0 -3px #e95420;
}
.close-doc {
    width: 24px;
    padding-right: 8px;
}
.menu {
    position: absolute;
    z-index: 2;
    top: 24px;
    left: 0;
    width: 304px;
    border: 1px solid #9a9a9a;
    border-radius: 6px;
    background: #fafafa;
    box-shadow: 0 1px 3px rgba(0, 0, 0, 0.4);
}
.menu button {
    width: 100%;
    height: 25px;
    padding: 0 8px 0 28px;
    justify-content: flex-start;
    text-align: left;
}
.menu button:disabled {
    color: #a3a3a3;
}
.menu .line {
    border-top: 1px solid #dadada;
}
.menu .hover {
    position: relative;
    padding-bottom: 1px;
    background: #dcdcdc;
}
.menu .more > button::after {
    content: "";
    width: 7px;
    height: 7px;
    margin: 0 3px 0 auto;
    border: solid #3d3d3d;
    border-width: 1px 1px 0 0;
    transform: rotate(45deg);
}
.menu kbd {
    margin-left: auto;
    color: #999;
    font: inherit;
}
.submenu {
    top: -1px;
    left: 300px;
    width: 213px;
}
.menu .checked > button::before {
    content: "";
    position: absolute;
    left: 12px;
    width: 4px;
    height: 9px;
    margin-top: -3px;
    border: solid #3d3d3d;
    border-width: 0 2px 2px 0;
    transform: rotate(40deg);
}

/* Toolbars */
.toolbar {
    display: flex;
    align-items: center;
    height: 39px;
    flex: none;
    padding: 0 0 1px 4px;
}
.toolbar hr {
    width: 1px;
    height: 33px;
    margin: 0 3px 0 4px;
    border: none;
    background: #dcdcdc;
}
.tool {
    width: 33px;
    height: 34px;
    flex: none;
    padding-left: 4px;
    justify-content: flex-start;
    border-radius: 5px;
}
.tool svg, .deck svg {
    width: 24px;
    height: 24px;
}
.tool.pressed, .deck.pressed {
    background: #d6d6d6;
    box-shadow: inset 0 0 0 1px #c2c2c2;
}
.drop {
    width: 11px;
    height: 34px;
    flex: none;
    padding: 2px 3px 0 0;
}
.drop::after {
    content: "";
    border: 3px solid transparent;
    border-top: 4px solid #000;
    border-bottom: none;
}
.drop.off::after {
    border-top-color: #c3c3c3;
}
.toolbar-rest {
    width: 277px;
    flex: none;
}
.toolbar-fill {
    width: 209px;
    flex: none;
}
.font-name {
    width: 280px;
    height: 34px;
    padding: 0 8px;
    border: 1px solid #c4c4c4;
    border-radius: 6px;
    background: #fff;
    color: #000;
}
.glyph, .glyph-bold {
    fill: #222;
}
.glyph-bold {
    font-weight: bold;
}
.orange {
    fill: #e95420;
    stroke: none;
}
.lines {
    fill: none;
    stroke: #222;
}
.lines .orange {
    fill: #e95420;
    stroke: none;
}

/* Document */
.work {
    flex: 1;
    display: flex;
    min-height: 0;
    border-bottom: 1px solid #bfbfbf;
}
.document {
    flex: 1;
    display: flex;
    flex-direction: column;
    min-width: 0;
}
.formula-bar {
    display: flex;
    align-items: center;
    height: 39px;
    flex: none;
    padding: 0 0 1px 4px;
}
.name-box {
    display: flex;
    width: 173px;
    height: 34px;
    border: 1px solid #c4c4c4;
    border-radius: 6px;
    background: #fff;
    color: #000;
}
.name-box input {
    flex: 1;
    min-width: 0;
    padding: 0 8px;
}
.name-box button {
    width: 35px;
    border-left: 1px solid #c4c4c4;
}
.formula-bar hr {
    width: 1px;
    height: 25px;
    margin: 0 4px;
    border: none;
    background: #dcdcdc;
}
.formula {
    flex: 1;
    height: 24px;
    border: 1px solid #c0c0c0;
    background: #fff;
}
.expand {
    width: 22px;
    padding-right: 4px;
}
.infobar {
    display: flex;
    align-items: center;
    height: 40px;
    flex: none;
    padding: 0 1px 0 3px;
    border: 1px solid #bfbfbf;
    background: #bce5f7;
    color: #000;
}
.infobar p {
    margin: 0 auto 0 7px;
}
.action {
    height: 34px;
    padding: 0 16px;
    border: 1px solid #c4c4c4;
    border-radius: 6px;
    background: #fff;
    color: #3d3d3d;
}
.dismiss {
    width: 24px;
    height: 24px;
    margin-left: 2px;
}

/* Grid */
.sheet-area {
    flex: 1;
    display: flex;
    min-height: 0;
}
.sheet {
    flex: 1;
    overflow: hidden;
    background: #fff;
}
table {
    width: 100%;
    table-layout: fixed;
    border-collapse: separate;
    border-spacing: 0;
}
th, td {
    width: 82px;
    height: 17px;
    padding: 0;
    border: solid #bfbfbf;
    border-width: 0 1px 1px 0;
}
th {
    border-color: #999;
    background: #fafafa;
    font-weight: normal;
    line-height: 16px;
}
thead th {
    height: 20px;
}
tbody th {
    padding-top: 2px;
    line-height: 14px;
}
th:first-child {
    width: 41px;
}
th.last, td.last {
    width: auto;
    border-right: none;
}
tbody tr:first-child > * {
    height: 18px;
}
th.selected {
    background: #e95420;
    border-color: #c9481b;
    color: #fff;
    font-weight: bold;
}
td.cursor {
    border: none;
    box-shadow: inset 0 0 0 2px #e95420;
}
.vscroll {
    width: 12px;
    display: flex;
    flex-direction: column;
    align-items: center;
    background: #fafafa;
}
.split-v {
    width: 12px;
    height: 5px;
    border: solid #b5b5b5;
    border-width: 2px 3px;
    background: #000;
}
.thumb-v {
    width: 6px;
    height: 350px;
    margin-top: 5px;
    border-radius: 3px;
    background: #888;
}
.hscroll {
    display: flex;
    align-items: center;
    justify-content: space-between;
    height: 12px;
    flex: none;
    padding: 0 12px 0 4px;
}
.thumb-h {
    width: 47.3%;
    height: 6px;
    border-radius: 3px;
    background: #888;
}
.split-h {
    width: 5px;
    height: 12px;
    border: solid #b5b5b5;
    border-width: 3px 2px;
    background: #000;
}

/* Sheet tabs */
.tabs {
    display: flex;
    height: 25px;
    flex: none;
    padding-left: 5px;
    font-size: 12px;
}
.tabs button {
    padding-bottom: 2px;
}
.tab-nav {
    width: 25px;
}
.tab-add {
    width: 24px;
    margin: 0 7px;
}
.tabs .tab {
    padding: 0 12px 2px;
}
.tab.current {
    background: #fff;
    box-shadow: inset 0 -3px #999;
    font-weight: bold;
}

/* Sidebar */
.sidebar {
    position: relative;
    width: 59px;
    flex: none;
    display: flex;
    flex-direction: column;
    align-items: center;
    gap: 8px;
    padding-left: 2px;
    border-left: 1px solid #bfbfbf;
}
.deck-menu {
    width: 36px;
    height: 39px;
    padding-bottom: 1px;
}
.deck {
    width: 36px;
    height: 34px;
    border-radius: 6px;
}
.deck-handle {
    position: absolute;
    top: 46%;
    left: 0;
    width: 7px;
    height: 73px;
    background: #999;
}
.deck-handle::after {
    content: "";
    border: 4px solid transparent;
    border-left: 5px solid #fff;
    border-right: none;
}

/* Status bar */
.statusbar {
    display: grid;
    grid-template-columns: 261fr 347fr 299fr 301fr 68px 29px 29px 29px 295fr 143px 49px;
    align-items: center;
    height: 20px;
    flex: none;
    font-size: 12px;
}
.statusbar > span {
    height: 14px;
    padding-left: 9px;
    border-right: 1px solid #dcdcdc;
    line-height: 14px;
    white-space: nowrap;
}
.statusbar > span:last-child {
    border-right: none;
    padding-left: 8px;
}
.statusbar .center {
    padding: 0;
    text-align: center;
}
.statusbar .icon {
    display: flex;
    align-items: center;
    justify-content: center;
}
.statusbar .zoom {
    display: flex;
    align-items: center;
    justify-content: space-between;
    padding: 0 6px 0 9px;
}
.zoom input {
    width: 98px;
    height: 14px;
    appearance: none;
}
.zoom input::-webkit-slider-runnable-track {
    height: 2px;
    background: #999;
}
.zoom input::-webkit-slider-thumb {
    appearance: none;
    width: 8px;
    height: 8px;
    margin-top: -3px;
    border: 1px solid #3d3d3d;
    border-radius: 50%;
    background: #fff;
}

.pointer {
    position: absolute;
    z-index: 3;
    left: 373px;
    top: 303px;
}
```
